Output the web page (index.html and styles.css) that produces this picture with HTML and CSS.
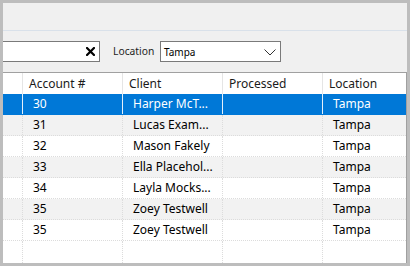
FILE: index.html
```html
<!DOCTYPE html>
<html>
<head>
<meta charset="utf-8">
<link rel="stylesheet" href="styles.css">
</head>
<body>
<div class="frame">
  <div class="toolbar"></div>
  <div class="filters">
    <div class="search">
      <svg class="clear" width="9" height="9" viewBox="0 0 9 9"><path d="M1 1L8 8M8 1L1 8" stroke="#000" stroke-width="2.2" stroke-linecap="square"/></svg>
    </div>
    <span class="label">Location</span>
    <div class="combo">
      <span>Tampa</span>
      <svg class="chev" width="12" height="7" viewBox="0 0 12 7"><path d="M0.5 0.5L6 6L11.5 0.5" fill="none" stroke="#333" stroke-width="1"/></svg>
    </div>
  </div>
  <div class="grid">
    <div class="row head">
      <div class="c c0"></div><div class="c c1">Account #</div><div class="c c2">Client</div><div class="c c3">Processed</div><div class="c c4">Location</div>
    </div>
    <div class="row sel">
      <div class="c c0"></div><div class="c c1">30</div><div class="c c2">Harper McT...</div><div class="c c3"></div><div class="c c4">Tampa</div>
    </div>
    <div class="row alt">
      <div class="c c0"></div><div class="c c1">31</div><div class="c c2">Lucas Exam...</div><div class="c c3"></div><div class="c c4">Tampa</div>
    </div>
    <div class="row">
      <div class="c c0"></div><div class="c c1">32</div><div class="c c2">Mason Fakely</div><div class="c c3"></div><div class="c c4">Tampa</div>
    </div>
    <div class="row alt">
      <div class="c c0"></div><div class="c c1">33</div><div class="c c2">Ella Placehol...</div><div class="c c3"></div><div class="c c4">Tampa</div>
    </div>
    <div class="row">
      <div class="c c0"></div><div class="c c1">34</div><div class="c c2">Layla Mocks...</div><div class="c c3"></div><div class="c c4">Tampa</div>
    </div>
    <div class="row alt">
      <div class="c c0"></div><div class="c c1">35</div><div class="c c2">Zoey Testwell</div><div class="c c3"></div><div class="c c4">Tampa</div>
    </div>
    <div class="row">
      <div class="c c0"></div><div class="c c1">35</div><div class="c c2">Zoey Testwell</div><div class="c c3"></div><div class="c c4">Tampa</div>
    </div>
    <div class="row filler">
      <div class="c c0"></div><div class="c c1"></div><div class="c c2"></div><div class="c c3"></div><div class="c c4"></div>
    </div>
  </div>
</div>
</body>
</html>
```
FILE: styles.css
```css
* { box-sizing: border-box; }
html, body { margin: 0; padding: 0; }
body {
  width: 410px;
  height: 266px;
  overflow: hidden;
  font-family: "Noto Sans", "Open Sans", sans-serif;
  font-size: 12px;
}
.frame {
  width: 410px;
  height: 266px;
  border: 3px solid #bdbdbd;
  background: #f0f0f0;
  display: flex;
  flex-direction: column;
}
.toolbar {
  height: 28px;
  flex: none;
  border-bottom: 1px solid #d9e1ea;
}
.filters {
  flex: none;
  display: flex;
  align-items: center;
  padding-top: 10px;
  height: 41px;
  padding-bottom: 10px;
}
.search {
  width: 97px;
  height: 21px;
  background: #fff;
  border: 1px solid #7a7a7a;
  border-left: none;
  display: flex;
  align-items: center;
  justify-content: flex-end;
  padding-right: 4px;
}
.clear { display: block; }
.label {
  margin-left: 13px;
  width: 47px;
  color: #1e1e1e;
  font-size: 10.3px;
  line-height: 21px;
}
.combo {
  width: 121px;
  height: 21px;
  background: #fff;
  border: 1px solid #7a7a7a;
  display: flex;
  align-items: center;
  justify-content: space-between;
  padding: 0 4px 0 3px;
  color: #000;
  font-size: 10px;
}
.chev { display: block; margin-top: 1px; }
.grid {
  flex: 1;
  display: flex;
  flex-direction: column;
  background: #fff;
  border-top: 1px solid #a0a0a0;
  border-right: 1px solid #a0a0a0;
  min-height: 0;
}
.row {
  display: flex;
  height: 21px;
  flex: none;
  border-bottom: 1px dotted #dcdcdc;
  color: #000;
}
.c {
  border-right: 1px dotted #dcdcdc;
  padding-left: 10px;
  white-space: nowrap;
  overflow: hidden;
  line-height: 20px;
}
.c0 { width: 20px; padding: 0; }
.c1, .c2, .c3 { width: 100px; }
.c4 { flex: 1; border-right: none; }
.head {
  border-bottom: none;
  color: #1a1a1a;
}
.head .c {
  border-right: 1px solid #e5e5e5;
  padding-left: 6px;
  line-height: 21px;
}
.head .c4 { border-right: none; }
.sel {
  background: #0078d7;
  color: #fff;
  border-bottom: 1px solid #0078d7;
}
.sel .c { border-right: 1px solid #e6f0fa; }
.sel .c4 { border-right: none; }
.alt { background: #f2f2f2; }
.filler { flex: 1; height: auto; border-bottom: none; }
.filler .c { height: 100%; }
.filler .c4 { border-right: none; }
```
